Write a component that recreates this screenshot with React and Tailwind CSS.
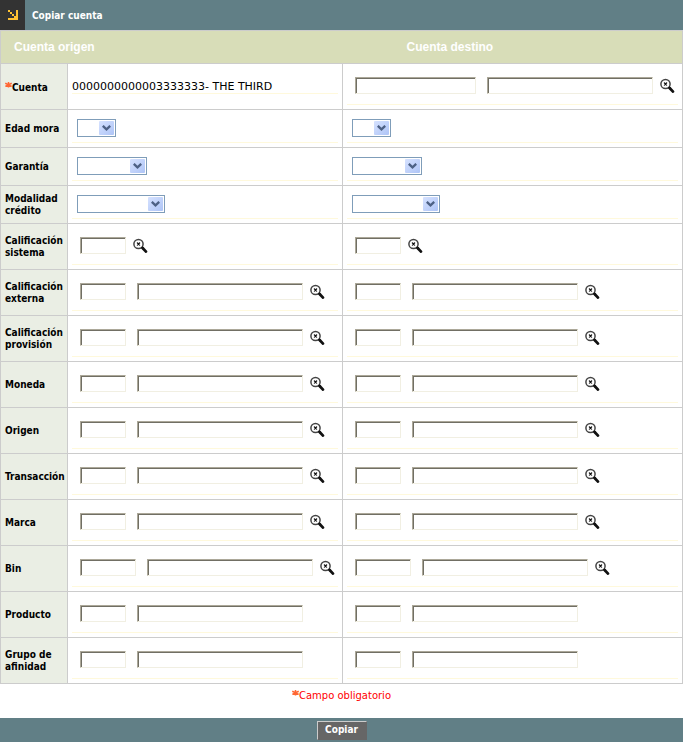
import React from "react";

const rows = [
  { label: "Edad mora", select: "w-[39px]" },
  { label: "Garantía", select: "w-[70px]" },
  { label: "Modalidad crédito", select: "w-[88px]" },
  { label: "Calificación sistema", code: "w-[46px]", search: true },
  { label: "Calificación externa", code: "w-[46px]", name: true, search: true },
  { label: "Calificación provisión", code: "w-[46px]", name: true, search: true },
  { label: "Moneda", code: "w-[46px]", name: true, search: true },
  { label: "Origen", code: "w-[46px]", name: true, search: true },
  { label: "Transacción", code: "w-[46px]", name: true, search: true },
  { label: "Marca", code: "w-[46px]", name: true, search: true },
  { label: "Bin", code: "w-[56px]", name: true, search: true },
  { label: "Producto", code: "w-[46px]", name: true },
  { label: "Grupo de afinidad", code: "w-[46px]", name: true },
];

function Asterisk() {
  return (
    <svg className="inline-block h-[7px] w-[7px] shrink-0" viewBox="0 0 7 7" aria-hidden="true">
      <path d="M3.5 0V5.6M0.3 1.2L6.7 4.4M6.7 1.2L0.3 4.4" stroke="#ff6633" strokeWidth="1.5" />
    </svg>
  );
}

function SearchButton({ label }) {
  return (
    <button type="button" aria-label={`Buscar ${label}`} className="ml-[7px] block h-[17px] shrink-0">
      <svg className="h-4 w-4" viewBox="0 0 16 16" fill="none">
        <circle cx="5.5" cy="6" r="4.6" stroke="#444" strokeWidth="1.5" />
        <path d="M4 4.5L7 7.5M7 4.5L4 7.5" stroke="#333" strokeWidth="1.2" />
        <path d="M4.5 5h2v2h-2z" fill="#111" />
        <path d="M8.6 9L10.4 10.8" stroke="#222" strokeWidth="2.2" />
        <path d="M9.6 10L13 13.6" stroke="#111" strokeWidth="2.8" strokeLinecap="round" />
      </svg>
    </button>
  );
}

function TextBox({ label, width }) {
  return (
    <span className={`${width} block h-[17px] shrink-0 border border-t-[#aca899] border-r-[#f1efe2] border-b-[#f1efe2] border-l-[#aca899]`}>
      <input
        type="text"
        aria-label={label}
        className="block h-full w-full border-t border-l border-[#716f64] bg-white px-px text-[10px] outline-none"
      />
    </span>
  );
}

function SelectBox({ label, width }) {
  return (
    <span className={`${width} relative block h-[18px]`}>
      <select
        aria-label={label}
        className="block h-full w-full appearance-none border border-[#7f9db9] bg-white text-[10px] outline-none"
      >
        <option></option>
      </select>
      <span className="pointer-events-none absolute top-[2px] right-[2px] flex h-[14px] w-[15px] items-center justify-center rounded-[1px] bg-linear-to-br from-[#d6e2ff] to-[#aec4f6]">
        <svg className="h-[6px] w-[9px]" viewBox="0 0 9 6" fill="none">
          <path d="M0.8 0.8L4.5 4.3L8.2 0.8" stroke="#4d6185" strokeWidth="2.3" />
        </svg>
      </span>
    </span>
  );
}

function Fields({ row, side }) {
  const label = `${row.label} ${side}`;
  if (row.select) {
    return (
      <div className="h-7 border-b border-[#fff9dc] pt-1 pl-[5px]">
        <SelectBox label={label} width={row.select} />
      </div>
    );
  }
  return (
    <div className="flex h-9 items-start border-b border-[#fff9dc] pt-2 pl-2">
      <TextBox label={`${label} código`} width={row.code} />
      {row.name && (
        <span className="ml-[11px]">
          <TextBox label={`${label} nombre`} width="w-[166px]" />
        </span>
      )}
      {row.search && <SearchButton label={label} />}
    </div>
  );
}

const line = "border border-[#cccccc]";
const labelCell = `${line} bg-[#eaeee4] px-1 py-0 text-left align-middle text-[10px] leading-3 font-bold text-black`;
const fieldCell = `${line} bg-white px-1 pt-[5px] pb-1 align-middle`;

export default function App() {
  return (
    <div className="w-full bg-white font-['DejaVu_Sans_Condensed','DejaVu_Sans',sans-serif] text-black">
      <header className="flex h-[30px] items-center bg-[#617f86]">
        <span className="flex h-full w-[25px] items-center justify-center bg-[#333333]">
          <svg className="h-[10px] w-[10px]" viewBox="0 0 10 10" fill="#ffc233" shapeRendering="crispEdges">
            <path d="M0 0h2v2H0zM2 2h2v2H2zM4 4h2v2H4zM6 6h2v2H6zM8 0h2v10H0V8h8z" />
          </svg>
        </span>
        <h1 className="pl-[7px] text-[10px] font-bold text-white">Copiar cuenta</h1>
      </header>

      <form onSubmit={(e) => e.preventDefault()}>
        <table className="w-full table-fixed border-collapse">
          <colgroup>
            <col className="w-[67px]" />
            <col className="w-[275px]" />
            <col />
          </colgroup>
          <thead>
            <tr className="h-[33px] bg-[#d8ddb8] text-left font-['Liberation_Sans',Arial,sans-serif] text-[12px] text-white">
              <th colSpan={2} className="border border-r-0 border-[#cccccc] py-0 pl-[13px] font-bold">
                Cuenta origen
              </th>
              <th className="border border-l-0 border-[#cccccc] py-0 pl-16 font-bold">Cuenta destino</th>
            </tr>
          </thead>
          <tbody>
            <tr>
              <th scope="row" className={labelCell}>
                <span className="flex pt-[2px]">
                  <Asterisk />
                  <span>Cuenta</span>
                </span>
              </th>
              <td className={fieldCell}>
                <div className="border-b border-[#fff9dc] font-['DejaVu_Sans',sans-serif] text-[11px] leading-3">
                  0000000000003333333- THE THIRD
                </div>
              </td>
              <td className={fieldCell}>
                <Fields row={{ label: "Cuenta", code: "w-[121px]", name: true, search: true }} side="destino" />
              </td>
            </tr>
            {rows.map((row) => (
              <tr key={row.label}>
                <th scope="row" className={labelCell}>
                  {row.label}
                </th>
                <td className={fieldCell}>
                  <Fields row={row} side="origen" />
                </td>
                <td className={fieldCell}>
                  <Fields row={row} side="destino" />
                </td>
              </tr>
            ))}
          </tbody>
        </table>

        <p className="flex h-[34px] justify-center pt-[6px] font-['DejaVu_Sans',sans-serif] text-[10px] leading-3 text-[#ff0000]">
          <Asterisk />
          <span>Campo obligatorio</span>
        </p>

        <footer className="flex h-6 items-center justify-center bg-[#617f86]">
          <button
            type="submit"
            className="h-[19px] w-[50px] border border-t-[#cccccc] border-r-[#666666] border-b-[#666666] border-l-[#cccccc] bg-[#666666] text-[10px] leading-3 font-bold text-white"
          >
            Copiar
          </button>
        </footer>
      </form>
    </div>
  );
}
